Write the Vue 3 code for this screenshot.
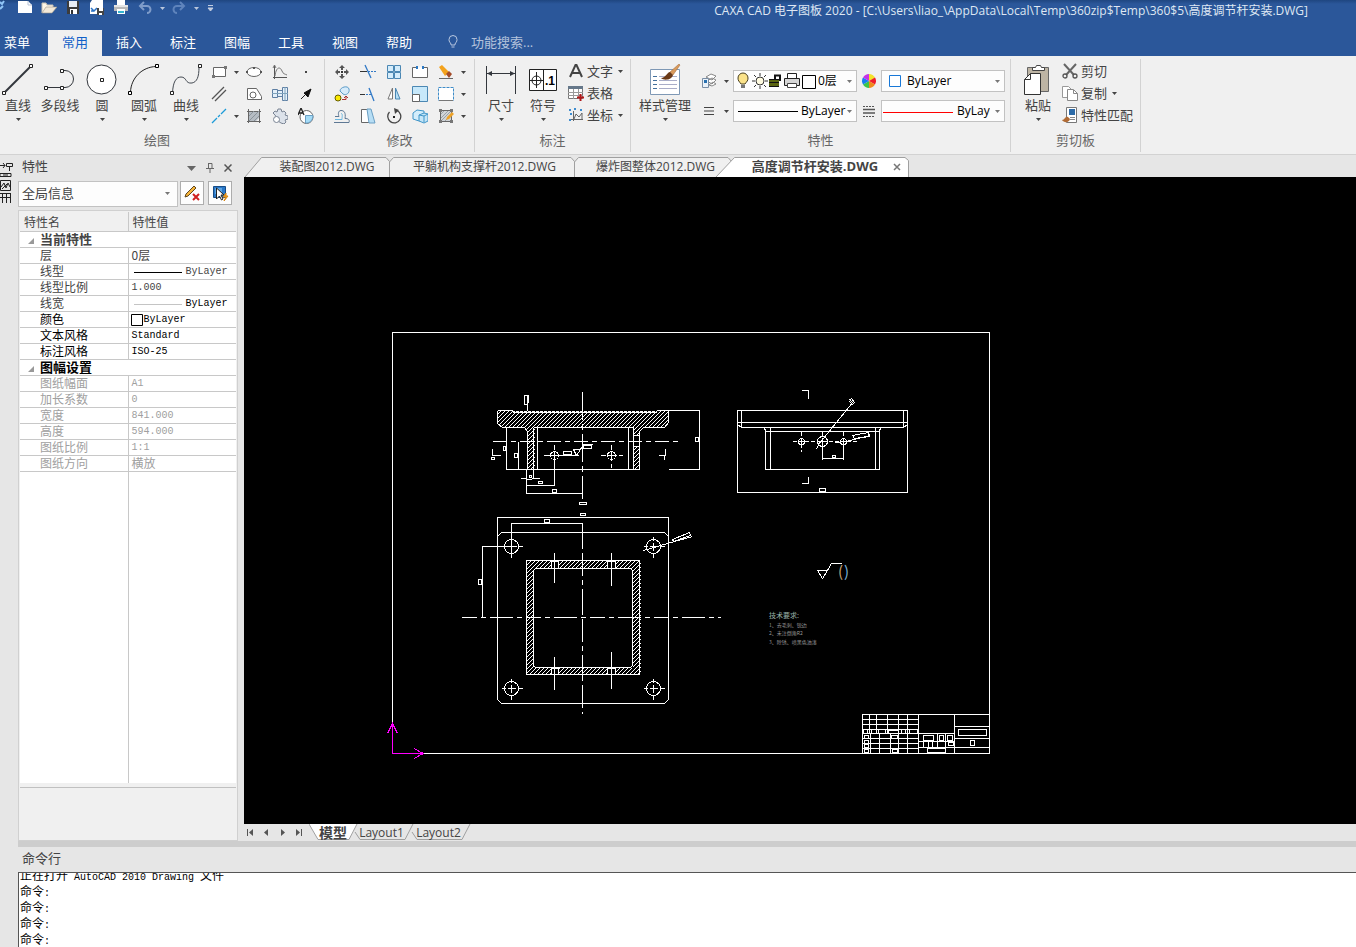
<script setup>
import { ref } from 'vue'

const caret = '<path d="M0 0h5L2.500 3z" fill="#444"/>'

const quick = [
  { name: '新建', w: 16, svg: '<path d="M1 1h10l4 4v8H1z" fill="#fff"/><path d="M11 1v4h4" fill="none" stroke="#b8c4d8"/>' },
  { name: '打开', w: 16, svg: '<path d="M1 13V3h4l1 2h6v3" fill="#fff6e6" stroke="#c9c2b4"/><path d="M1 13l4-6h11l-5 6z" fill="#f3e9d8" stroke="#9a958a" stroke-width=".6"/>' },
  { name: '保存', w: 16, svg: '<path d="M2 1h12v13H2z" fill="#3c3c3c"/><path d="M4 1h8v6H4z" fill="#e8eef5"/><path d="M5 9h7v5H5z" fill="#fff"/><path d="M6 10h2v4H6z" fill="#333"/>' },
  { name: '另存为', w: 16, svg: '<path d="M3 0h11v14H1V3z" fill="#fff"/><path d="M2 8l3 3 3-3M5 11H2" fill="none" stroke="#2b72c4" stroke-width="1.5"/><path d="M8 8h7v7H8z" fill="#444"/><path d="M10 8h4v3h-4zM10 13h3v2h-3z" fill="#fff"/>' },
  { name: '打印', w: 16, svg: '<path d="M4 0h8v5H4z" fill="#fff"/><path d="M1 5h14v6H1z" fill="#b9b9b9"/><path d="M1 5h14v2H1z" fill="#e4e4e4"/><path d="M4 9h8v5H4z" fill="#fff"/><path d="M5 11h6v2H5z" fill="#35b5d0"/>' }
]

const big = {
  line: '<path d="M3 28L28 3" stroke="#33373d" stroke-width="2"/><g fill="#fff" stroke="#222"><path d="M.5 27.500h3v3h-3zM27.500.5h3v3h-3z"/></g>',
  poly: '<path d="M2 23.500h16M18 6.500h3a8.500 8.500 0 010 17h-3" fill="none" stroke="#33373d"/><g fill="#fff" stroke="#222"><path d="M.5 22.500h3v3h-3zM16.500 22.500h3v3h-3zM16.500 5.500h3v3h-3z"/></g>',
  circle: '<circle cx="15.500" cy="15.500" r="14.500" fill="#fff" stroke="#33373d"/><path d="M14.500 14.500h3v3h-3z" fill="#fff" stroke="#222"/>',
  arc: '<path d="M2.500 28C3 14 14 3 28 2.500" fill="none" stroke="#222"/><g fill="#fff" stroke="#000"><path d="M.5 27.500h3v3h-3zM27.500.5h3v3h-3z"/></g>',
  curve: '<path d="M2.500 29C3 18 6 13 11 13c6 0 4 7 11 6 5-1 7-6 7-16" fill="none" stroke="#444a52"/><g fill="#fff" stroke="#222"><path d="M.5 27.500h3v3h-3zM28.500.5h3v3h-3z"/></g>',
  dim: '<path d="M1.500 2v28M30.500 2v28M2 9.500h28" stroke="#33373d" fill="none"/><path d="M2 9.500l5-2.500v5zM30 9.500l-5-2.500v5z" fill="#33373d"/>',
  symbol: '<path d="M2.500 5.500h27v21h-27z" fill="#fff" stroke="#222"/><path d="M16.500 5v22M9.500 8v16M3 16.500h13" stroke="#222"/><circle cx="9.500" cy="16.500" r="4.500" fill="none" stroke="#222"/><text x="18" y="21" font-family="Liberation Sans" font-weight="700" font-size="12">.1</text>',
  style: '<path d="M1.500 5.500h29v25h-29z" fill="#fff" stroke="#7e98b5"/><g stroke="#44709c"><path d="M4 12.500h4M4 16.500h4M4 20.500h4M4 24.500h4"/></g><path d="M10 12.500h18M10 16.500h18M10 20.500h18M10 24.500h18" stroke="#a9adc8"/><path d="M30 0l-9 8 3 3 7-10z" fill="#d99a5b" stroke="#9c6330" stroke-width=".5"/><path d="M21 8c-3 0-4 6-9 6 3 3 11 2 12-3z" fill="#6b3a16"/>',
  paste: '<path d="M5.500 3.500h21v24h-21z" fill="#bdb4a4" stroke="#666"/><path d="M10.500 3.500h3l1-2h4l1 2h3v3h-12z" fill="#fff" stroke="#444"/><path d="M8.500 9.500h10v21h-16v-15z" fill="#fff" stroke="#333"/><path d="M8.500 9.500v6h-6" fill="none" stroke="#333"/>'
}

const drawBig = [
  ['直线', 'line', true], ['多段线', 'poly', false], ['圆', 'circle', true], ['圆弧', 'arc', true], ['曲线', 'curve', true]
]

const drawSmall = [
  { name: '矩形', svg: '<path d="M2.500 3.500h12v9h-12z" fill="#fff" stroke="#666"/><path d="M1 11h3v3H1zM13 2h3v3h-3z" fill="#777"/>' },
  { caret: true },
  { name: '椭圆', svg: '<ellipse cx="8" cy="8" rx="7" ry="4.500" fill="#fff" stroke="#666"/><path d="M7 3h2v2H7zM0 7h2v2H0zM14 7h2v2h-2z" fill="#555"/>' },
  { name: '公式曲线', svg: '<path d="M2.500 1v14M1 13.500h14" stroke="#555"/><path d="M3 12C4 3 8 2 10 7c1 3 3 3 5 4M1 4l1.500-3L4 4" fill="none" stroke="#777"/>' },
  { name: '点', svg: '<path d="M7 7h2v2H7z" fill="#444"/>' },
  { name: '平行线', svg: '<path d="M1 13L13 1M4 15L15 4" stroke="#555" stroke-width="1.300"/>' },
  { blank: true },
  { name: '轮廓线', svg: '<path d="M1.500 2.500h9l5 8v3h-14z" fill="#fff" stroke="#666"/><circle cx="7" cy="9" r="3" fill="none" stroke="#666"/>' },
  { name: '轴', svg: '<path d="M.5 3.500h5v8h-5zM5.500 4.500h5v6h-5zM10.500 1.500h5v13h-5z" fill="#e4f0fa" stroke="#5e7fa3"/><path d="M0 7.500h16M13 1v14" stroke="#7fa3bd"/>' },
  { name: '箭头', svg: '<path d="M3 13l4-4" stroke="#222"/><path d="M13 3l-3 8-2-2-2-2z" fill="#111" stroke="#111"/>' },
  { name: '中心线', svg: '<path d="M1 15L6 10M7 9l2-2M10 6l5-5" stroke="#1c9bd8" stroke-width="1.300"/>' },
  { caret: true },
  { name: '剖面线', svg: '<path d="M3 3h10v7l-3 3H3z" fill="#b5bcc3"/><path d="M1 3.500h14M2.500 1v14M13.500 1v14M1 13.500h14" fill="none" stroke="#666"/><path d="M3 8l5-5M3 13L13 3M8 13l5-5" stroke="#8b939b"/>' },
  { name: '填充', svg: '<path d="M3 7L1 5l2-2 2 1 1-3h3l1 3 2-1 2 2-1 2 3 1v3l-3 1 1 2-2 2-3-1-3-2-1-3z" fill="#dce2ea" stroke="#7a8494"/><circle cx="4.500" cy="11.500" r="3" fill="#fff" stroke="#7a8494"/>' },
  { name: '局部放大', svg: '<circle cx="8.500" cy="9" r="6.500" fill="#fff" stroke="#666"/><path d="M7.500 7.500h7.500c0 4-3 7.500-6 7.500h-1.500z" fill="#a5dcf7" stroke="#6a9fc4"/><path d="M0 7l3-7 3 7M1 5h4" fill="none" stroke="#222" stroke-width="1.300"/>' }
]

const modify = [
  { name: '移动', svg: '<path d="M8 1l3 3H9v2H7V4H5zM8 15l-3-3h2v-2h2v2h2zM1 8l3-3v2h2v2H4v2zM15 8l-3 3V9h-2V7h2V5z" fill="#555"/><path d="M7 7h2v2H7z" fill="#333"/>' },
  { name: '裁剪', svg: '<path d="M5 1l6 13" stroke="#3179c6" stroke-width="1.300"/><path d="M8 7.500h8" stroke="#3179c6" stroke-dasharray="2 1"/><path d="M0 7.500h7" stroke="#333"/>' },
  { name: '阵列', svg: '<g fill="#d4ecfb" stroke="#4b87b3"><path d="M1.500 1.500h6v6h-6zM8.500 1.500h6v6h-6zM1.500 8.500h6v6h-6zM8.500 8.500h6v6h-6z"/></g>' },
  { name: '打断', svg: '<path d="M5 3.500H.5v10h15v-10H11" fill="#fff" stroke="#666"/><path d="M4 2h2v3H4zM10 2h2v3h-2z" fill="#2b79c4"/>' },
  { name: '删除', svg: '<path d="M1 3l3-2 7 7-4 4z" fill="#f3a21c"/><path d="M8 10l3-3 3 3-3 4z" fill="#a44b28"/><path d="M1 14.500h14" stroke="#666"/>' },
  { caret: true },
  { name: '平移复制', svg: '<path d="M6 5c0-4 8-6 9-2s-3 7-6 5z" fill="#d6ebfa" stroke="#5b9bc8"/><circle cx="4" cy="12" r="3" fill="#fbe900" stroke="#665e00"/><path d="M8 13.500h4v-3M10 12l2-2 2 2" fill="none" stroke="#a33"/>' },
  { name: '延伸', svg: '<path d="M9 2l5 13" stroke="#3179c6" stroke-width="1.300"/><path d="M0 8.500h5" stroke="#333"/><path d="M6 8.500h5" stroke="#3179c6" stroke-dasharray="2 1"/>' },
  { name: '镜像', svg: '<path d="M6.500 2v11H2z" fill="#fff" stroke="#777"/><path d="M9.500 2v11H14z" fill="#b8dff5" stroke="#4b87b3"/>' },
  { name: '缩放', svg: '<path d="M.5.500h15v15H.5z" fill="#c7e8fa" stroke="#4b87b3"/><path d="M.5 8.500h7v7h-7z" fill="#fff" stroke="#666"/>' },
  { name: '拉伸', svg: '<path d="M.5 1.500h15v13H.5z" fill="#fff"/><path d="M.5 1.500h15v13H.5z" fill="none" stroke="#3f8cc8" stroke-dasharray="3 1"/><path d="M1 14.500h14" stroke="#777"/>' },
  { caret: true },
  { name: '等距线', svg: '<path d="M0 14.500h15c1-3-1-4-4-4 1-6-1-8-4-8s-3 4-2 6H1" fill="none" stroke="#5e7894"/><path d="M1 11.500h7c0-3 1-6-1-6" fill="none" stroke="#6ab7e0"/>' },
  { name: '倒角', svg: '<path d="M1.500 1.500h8l4 13h-12z" fill="#fff" stroke="#666"/><path d="M7 1h4l4 14H9z" fill="#b7def5" stroke="#6a9fc4"/>' },
  { name: '旋转', svg: '<path d="M11 2.500A6.500 6.500 0 113.500 4" fill="none" stroke="#444" stroke-width="1.300"/><path d="M8 0l5 2-4 4z" fill="#444"/><path d="M7 8h2v2H7z" fill="#222"/>' },
  { name: '分解', svg: '<path d="M1 5l4-3 7 1v7l-5 3-6-2z" fill="#d3edfb" stroke="#3f95c8"/><path d="M7 7l5-2 4 1v7l-4 2-5-2zM7 7l5 1v6M12 8l4-2" fill="#c5e6f8" stroke="#3f95c8"/>' },
  { name: '编辑填充', svg: '<path d="M2.500 2.500h11v11h-11z" fill="#d0d4d8" stroke="#666"/><path d="M3 6l3-3M3 10l7-7M3 13L13 3M7 13l6-6" stroke="#9aa0a6"/><path d="M1 1h3v3H1zM12 1h3v3h-3zM1 12h3v3H1zM12 12h3v3h-3z" fill="#777"/><path d="M8 12l1-3 5-5 2 2-5 5z" fill="#eda229"/>' },
  { caret: true }
]

const annotate = [
  { name: '文字', caret: true, svg: '<path d="M2 14L7.500 2h1L14 14M4 10h8" fill="none" stroke="#444" stroke-width="2"/>' },
  { name: '表格', caret: false, svg: '<path d="M.5 1.500h14v12H.5z" fill="#fff" stroke="#777"/><path d="M0 1h15v3H0z" fill="#66788a"/><path d="M0 7.500h15M0 10.500h15M5.500 4v10M10.500 4v10" stroke="#999"/><path d="M12.500 9v7M9 12.500h7" stroke="#b01818" stroke-width="2"/>' },
  { name: '坐标', caret: true, svg: '<path d="M5.500 4v10M3 12.500h12M6 12l2-5 3 3 3-4v6" fill="none" stroke="#666"/><path d="M1 2h2v2H1zM2 6h2v2H2zM6 1h2v2H6zM12 2h2v2h-2zM1 12h2v2H1z" fill="#3c8cd0"/>' }
]

const clipboard = [
  { name: '剪切', caret: false, svg: '<path d="M2 1l10 11M14 1L4 12" stroke="#666" stroke-width="2"/><circle cx="3" cy="13" r="2" fill="none" stroke="#555" stroke-width="1.300"/><circle cx="13" cy="13" r="2" fill="none" stroke="#555" stroke-width="1.300"/>' },
  { name: '复制', caret: true, svg: '<path d="M.5 1.500h6l3 3v8h-9z" fill="#fff" stroke="#999"/><path d="M5.500 4.500h6l4 4v7h-10z" fill="#fff" stroke="#888"/><path d="M11.500 5v3.500h4" fill="none" stroke="#888"/>' },
  { name: '特性匹配', caret: false, svg: '<path d="M4.500.500h10v15h-10z" fill="#fff" stroke="#777"/><path d="M7 2h6v6H7z" fill="#2c6ba8"/><path d="M8 10.500h5M8 12.500h5" stroke="#888"/><path d="M0 13c3 0 3-4 6-3l2 2c-1 4-6 4-8 1z" fill="#b06b35"/>' }
]

const menus = ['常用', '插入', '标注', '图幅', '工具', '视图', '帮助']
const activeMenu = ref('常用')

const rows = [
  { label: '层', value: '0层', han: true },
  { label: '线型', value: 'ByLayer', line: '#000' },
  { label: '线型比例', value: '1.000' },
  { label: '线宽', value: 'ByLayer', line: '#c4c4c4', dark: true },
  { label: '颜色', value: 'ByLayer', swatch: true, dark: true },
  { label: '文本风格', value: 'Standard', dark: true },
  { label: '标注风格', value: 'ISO-25', dark: true }
]
const sheet = [
  ['图纸幅面', 'A1'], ['加长系数', '0'], ['宽度', '841.000'], ['高度', '594.000'], ['图纸比例', '1:1'], ['图纸方向', '横放', true]
]

const title = 'CAXA CAD 电子图板 2020 - [C:\\Users\\liao_\\AppData\\Local\\Temp\\360zip$Temp\\360$5\\高度调节杆安装.DWG]'
const holes = [[511, 546], [653, 546], [511, 688], [653, 688]]
</script>

<template>
  <div class="app">
    <header class="top">
      <div class="titlebar">
        <div class="quick">
          <svg class="appmark" width="6" height="16"><path d="M0 2l2 2 2-3M0 9l3-3" stroke="#8fc4f5" stroke-width="2" fill="none" /></svg>
          <button v-for="q in quick" :key="q.name" :aria-label="q.name"><svg width="16" height="16" v-html="q.svg" /></button>
          <button aria-label="撤销" class="hist"><svg width="16" height="16"><path d="M3 6h7a3 3 0 010 7M7 2L3 6l4 4" fill="none" stroke="#7f9cc9" stroke-width="2" /></svg></button>
          <button aria-label="撤销列表" class="drop"><svg width="5" height="3"><path d="M0 0h5L2.500 3z" fill="#b9c6dc" /></svg></button>
          <button aria-label="重做" class="hist"><svg width="16" height="16"><path d="M13 6H6a3 3 0 000 7M9 2l4 4-4 4" fill="none" stroke="#5f84bc" stroke-width="2" /></svg></button>
          <button aria-label="重做列表" class="drop"><svg width="5" height="3"><path d="M0 0h5L2.500 3z" fill="#b9c6dc" /></svg></button>
          <button aria-label="自定义" class="drop more"><svg width="7" height="7"><path d="M1 .5h5M1 3h5L3.500 6z" stroke="#c3cde0" fill="#c3cde0" /></svg></button>
        </div>
        <h1>{{ title }}</h1>
      </div>
      <nav class="menus">
        <button class="file">菜单</button>
        <button v-for="m in menus" :key="m" :class="{ active: m === activeMenu }" @click="activeMenu = m">{{ m }}</button>
        <label class="search">
          <svg width="10" height="14"><path d="M3 9C2 7 1 7 1 4.500a4 4 0 018 0C9 7 8 7 7 9v1H3zM3.500 12h3" fill="none" stroke="#b8c7e0" /></svg>
          <input type="text" placeholder="功能搜索..." aria-label="功能搜索">
        </label>
      </nav>
    </header>

    <section class="ribbon">
      <div class="group draw">
        <div class="tools">
          <button v-for="b in drawBig" :key="b[0]" class="big">
            <svg width="32" height="32" v-html="big[b[1]]" /><span>{{ b[0] }}</span>
            <svg v-if="b[2]" width="5" height="3" v-html="caret" />
          </button>
          <div class="small">
            <template v-for="(s, i) in drawSmall" :key="i">
              <span v-if="s.blank" />
              <button v-else :aria-label="s.name || '更多'">
                <svg v-if="s.caret" width="5" height="3" v-html="caret" />
                <svg v-else width="16" height="16" v-html="s.svg" />
              </button>
            </template>
          </div>
        </div>
        <h2>绘图</h2>
      </div>

      <div class="group modify">
        <div class="tools">
          <div class="small">
            <button v-for="(s, i) in modify" :key="i" :aria-label="s.name || '更多'">
              <svg v-if="s.caret" width="5" height="3" v-html="caret" />
              <svg v-else width="16" height="16" v-html="s.svg" />
            </button>
          </div>
        </div>
        <h2>修改</h2>
      </div>

      <div class="group note">
        <div class="tools">
          <button class="big"><svg width="32" height="32" v-html="big.dim" /><span>尺寸</span><svg width="5" height="3" v-html="caret" /></button>
          <button class="big"><svg width="32" height="32" v-html="big.symbol" /><span>符号</span><svg width="5" height="3" v-html="caret" /></button>
          <div class="list">
            <button v-for="a in annotate" :key="a.name">
              <svg width="16" height="16" v-html="a.svg" />{{ a.name }}<svg v-if="a.caret" width="5" height="3" v-html="caret" />
            </button>
          </div>
        </div>
        <h2>标注</h2>
      </div>

      <div class="group props">
        <div class="tools">
          <button class="big wide"><svg width="32" height="32" v-html="big.style" /><span>样式管理</span><svg width="5" height="3" v-html="caret" /></button>
          <div class="fields">
            <button aria-label="图层设置"><svg width="16" height="16"><path d="M5 4l5-3 5 2-4 4zM6 8l5-3 4 2-4 4zM8 12l4-3 3 2-4 2z" fill="#fff" stroke="#888" /><path d="M1.500 5.500h6v9h-6z" fill="#eaf2fa" stroke="#7a8ea5" /><path d="M3 7h3v3H3z" fill="#2870b0" /></svg></button>
            <button aria-label="图层列表"><svg width="5" height="3" v-html="caret" /></button>
            <div class="combo">
              <svg width="84" height="20">
                <path d="M7 13C5 10 4 10 4 7a5 5 0 0110 0c0 3-1 3-3 6z" fill="#fbe38a" stroke="#4a4020" /><path d="M7 14h4v3H7z" fill="#777" />
                <circle cx="26" cy="10" r="4" fill="#fffbe0" stroke="#333" /><path d="M26 2v3M26 15v3M18 10h3M31 10h3M20 4l2 2M30 14l2 2M32 4l-2 2M22 14l-2 2" stroke="#333" />
                <path d="M41 9V4.500h5V10" fill="none" stroke="#111" stroke-width="2" /><path d="M35 8h10v8H35z" fill="#5a6410" /><path d="M35 8.500h10M35 11.500h10M35 15.500h10" stroke="#111" />
                <path d="M53.500 2.500h9v6h-9z" fill="#fff" stroke="#222" /><path d="M50.500 7.500h15v7h-15z" fill="#d6d6d6" stroke="#222" /><path d="M53.500 12.500h9v4h-9z" fill="#fff" stroke="#444" />
                <path d="M68.500 4.500h13v13h-13z" fill="#fff" stroke="#000" />
              </svg>
              <select aria-label="图层"><option>0层</option></select>
              <svg width="5" height="3"><path d="M0 0h5L2.500 3z" fill="#777" /></svg>
            </div>
            <button aria-label="颜色"><svg width="14" height="14"><g><path d="M7 7L7 0A7 7 0 0113 4z" fill="#f3e32a" /><path d="M7 7l6-3.500a7 7 0 010 7z" fill="#f01d2b" /><path d="M7 7l6 3.500A7 7 0 017 14z" fill="#f08a1c" /><path d="M7 7v7a7 7 0 01-6-3.500z" fill="#3ec64a" /><path d="M7 7l-6 3.500a7 7 0 010-7z" fill="#1a7ef0" /><path d="M7 7L1 3.500A7 7 0 017 0z" fill="#c832e8" /></g></svg></button>
            <div class="combo">
              <svg width="22" height="20"><path d="M7.500 4.500h11v11h-11z" fill="#fff" stroke="#1878d8" /></svg>
              <select class="gap" aria-label="颜色值"><option>ByLayer</option></select>
              <svg width="5" height="3"><path d="M0 0h5L2.500 3z" fill="#777" /></svg>
            </div>
            <button aria-label="线型"><svg width="12" height="12"><path d="M1 2.500h10M1 6h10M1 9.500h10" stroke="#444" /></svg></button>
            <button aria-label="线型列表"><svg width="5" height="3" v-html="caret" /></button>
            <div class="combo">
              <svg width="64" height="20"><path d="M4 10.500h60" stroke="#000" /></svg>
              <select class="tight" aria-label="线型值"><option>ByLayer</option></select>
              <svg width="5" height="3"><path d="M0 0h5L2.500 3z" fill="#777" /></svg>
            </div>
            <button aria-label="线宽"><svg width="14" height="14"><path d="M1 2.500h12M1 12.500h12" stroke="#555" stroke-dasharray="2 1" /><path d="M1 5.500h12M1 9h12" stroke="#555" stroke-width="1.500" /></svg></button>
            <div class="combo">
              <svg width="72" height="20"><path d="M1 11.500h70" stroke="#f00" /></svg>
              <select class="tight clip" aria-label="线宽值"><option>ByLayer</option></select>
              <svg width="5" height="3"><path d="M0 0h5L2.500 3z" fill="#777" /></svg>
            </div>
          </div>
        </div>
        <h2>特性</h2>
      </div>

      <div class="group clips">
        <div class="tools">
          <button class="big"><svg width="32" height="32" v-html="big.paste" /><span>粘贴</span><svg width="5" height="3" v-html="caret" /></button>
          <div class="list">
            <button v-for="a in clipboard" :key="a.name">
              <svg width="16" height="16" v-html="a.svg" />{{ a.name }}<svg v-if="a.caret" width="5" height="3" v-html="caret" />
            </button>
          </div>
        </div>
        <h2>剪切板</h2>
      </div>
    </section>

    <div class="work">
      <div class="strip">
        <svg width="14" height="52" fill="none" stroke="#222">
          <path d="M0 10.500h5M3 8l2 2.500L3 13M6.500 8.500h6v3h-6zM9.500 11v5M0 18.500h11v3H0zM3 20h5M.5 25.500h10v10H.5zM1 32l3-4 2 5 2-5 2 4M2 34l5-5M0 38.500h11M2.500 38v10M6.500 38v10M10.500 38v10M0 42.500h11" />
        </svg>
      </div>

      <aside class="panel">
        <div class="phead">
          <h2>特性</h2>
          <button aria-label="菜单"><svg width="9" height="5"><path d="M0 0h9L4.500 5z" fill="#666" /></svg></button>
          <button aria-label="固定"><svg width="8" height="10"><path d="M2 .5h4v5M2.500 0v6M0 5.500h8M4 6v4" fill="none" stroke="#666" /></svg></button>
          <button aria-label="关闭"><svg width="8" height="8"><path d="M.5.500l7 7M7.500.500l-7 7" stroke="#555" stroke-width="1.500" /></svg></button>
        </div>
        <div class="pick">
          <div class="combo">
            <select aria-label="对象"><option>全局信息</option></select>
            <svg width="5" height="3"><path d="M0 0h5L2.500 3z" fill="#777" /></svg>
          </div>
          <button aria-label="编辑"><svg width="18" height="18"><path d="M2 13l1-3 8-8 2 2-8 8z" fill="#f6b43a" stroke="#5d4620" /><path d="M10 10l6 6M16 10l-6 6" stroke="#d02020" stroke-width="2" /></svg></button>
          <button aria-label="选择"><svg width="18" height="18"><path d="M2.500 2.500h12v11h-12z" fill="#2a78c8" stroke="#174c86" /><path d="M4 4h7v6H4z" fill="#5fa5e2" /><path d="M5.500 4v11l3-3 2 4 1.500-1-2-4h3z" fill="#fff" stroke="#222" /><path d="M15 9l-3 4h3l-2 4 4-5h-2z" fill="#f5a623" stroke="#d88510" /></svg></button>
        </div>
        <div class="sheet">
          <table>
            <thead><tr><th>特性名</th><th>特性值</th></tr></thead>
            <tbody>
              <tr class="cat"><td colspan="2"><svg width="6" height="6"><path d="M6 0v6H0z" fill="#999" /></svg>当前特性</td></tr>
              <tr v-for="r in rows" :key="r.label" :class="{ dark: r.dark && !r.line }">
                <td>{{ r.label }}</td>
                <td :class="{ dark: r.dark, han: r.han }">
                  <div class="val">
                    <svg v-if="r.line" width="54" height="12"><path d="M2 6.500h48" :stroke="r.line" /></svg>
                    <svg v-if="r.swatch" class="swatch" width="12" height="12"><path d="M.5.500h11v11H.5z" fill="#fff" stroke="#000" /></svg>
                    {{ r.value }}
                  </div>
                </td>
              </tr>
              <tr class="cat dark"><td colspan="2"><svg width="6" height="6"><path d="M6 0v6H0z" fill="#999" /></svg>图幅设置</td></tr>
              <tr v-for="s in sheet" :key="s[0]" class="off"><td>{{ s[0] }}</td><td :class="{ han: s[2] }">{{ s[1] }}</td></tr>
            </tbody>
          </table>
          <div class="rest"><span /><span /></div>
          <div class="hint" />
        </div>
      </aside>

      <main class="view">
        <div class="docs">
          <svg class="shape" width="672" height="22" fill="#f0f0f0" stroke="#a0a0a0">
            <path d="M1 22L17.500 2.500H142l3.500 4V22" /><path d="M145.500 22V7l4-4.500H327l3.500 4V22" /><path d="M330.500 22V7l4-4.500H484L488 7v15" />
            <path d="M472 22L490.500 2.500H661l3.500 3V22" fill="#fff" />
          </svg>
          <button>装配图2012.DWG</button>
          <button class="second">平躺机构支撑杆2012.DWG</button>
          <button class="third">爆炸图整体2012.DWG</button>
          <button class="active">高度调节杆安装.DWG</button>
          <button class="close" aria-label="关闭文档"><svg width="8" height="8"><path d="M1 1l6 6M7 1L1 7" stroke="#777" stroke-width="1.500" /></svg></button>
        </div>

        <div class="canvas">
          <svg viewBox="244 177 1112 647" width="1112" height="647" fill="none" stroke="#fff" shape-rendering="crispEdges">
            <defs>
              <pattern id="hatch" width="4" height="4" patternUnits="userSpaceOnUse" patternTransform="translate(-.5 -.5)">
                <path d="M0 3h1v1H0zM1 2h1v1H1zM2 1h1v1H2zM3 0h1v1H3z" fill="#fff" stroke="none" />
              </pattern>
            </defs>
            <g transform="translate(.5 .5)">
              <path d="M392 332H989V753H392z" />

              <!-- front section -->
              <path d="M497 410H668V422l-4 5h-21l-4 4v4h-7v-8H534v42h-7v-38l-4-4h-21l-5-5zM633 446h6v23h-6z" fill="url(#hatch)" stroke="none" />
              <path d="M497 410h15M656 410h43M512 412H656M497 410v13l5 4h22l3 4v38M668 410v12l-4 5h-21l-4 4v38M533 427V469M533 427H633V469M633 435h6M633 446h6M506 427V469H639M537 427V469M628 427V469" />
              <path d="M512 411H656" stroke-dasharray="2 2" />
              <path d="M492 441H678" stroke-dasharray="14 4 5 4" />
              <path d="M582 391V498" stroke-dasharray="28 4 6 4" />
              <path d="M699 410V469M668 469h31M695 437h3v4h-3zM524 395h3v9h-3zM528 394v8M527 404v6M492 448v7h8M491 457h3v2h-3zM503 446h2v4h-2zM514 453h3v4h-3zM518 441v28M665 448v7h-7M664 455v4" />
              <circle cx="554" cy="455" r="4" /><circle cx="611" cy="455" r="4" />
              <path d="M543 455h35M554 444v5M554 451v34M600 455h5M607 455h9M618 455h4M611 444v5M611 451v9M611 463v4M563 451h8v3h-8zM573 449h7l-4 6zM580 449l3-5h9M583 445h8v3h-8z" />
              <path d="M526 469v24h56M526 485h28M533 469v9M520 478h5l3 1 8-1h3M529 475h2v2h-2zM538 481h4v2h-4zM552 489h4v3h-4zM579 502h7v2h-7z" />

              <!-- plan -->
              <path d="M501 532H664l4 4V699l-4 4H501l-4-4V536z" />
              <path d="M497 516V536M668 516V536M497 517H668M580 513h5v2h-5zM511 522v33M511 523h71M544 519h5v3h-5zM482 546V617M481 546h35M478 579h3v5h-3z" />
              <g v-for="h in holes" :key="h.join()" :transform="`translate(${h[0]} ${h[1]})`">
                <circle r="7" /><path d="M-4 0h8M0-4v8M-10 0h4M7 0h4M0-10v4M0 7v4" />
              </g>
              <path d="M526 560H640V674H526zM533 568V667H632V568z" fill="url(#hatch)" fill-rule="evenodd" stroke="none" />
              <path d="M526 560H639V674H526zM535 568H630l2 2V665l-2 2H535l-2-2V570z" />
              <path d="M551 561h7v7h-7zM607 561h8v7h-8zM551 668h7v6h-7zM607 668h8v6h-8z" fill="#000" />
              <path d="M554 552V582M611 552V585M554 656V689M611 651V688" />
              <path d="M461 617H720" stroke-dasharray="15 4 5 4 23 4 5 4" />
              <path d="M582 522V713" stroke-dasharray="26 4 23 4 5 4" />
              <path d="M643 550l24-7 25-7M672 539l17-7 1 3-17 6z" />

              <!-- side view -->
              <path d="M737 410H907V492H737zM737 422H907M741 410v17H903V410M737 424l4 3M907 424l-4 3M764 427l1 4V469H879V431l1-4M765 431H879M770 427V469M875 427V469M819 488h6v3h-6z" />
              <circle cx="801" cy="441" r="3" /><circle cx="822" cy="441" r="5" /><circle cx="843" cy="441" r="3" />
              <path d="M792 441h64M801 431v20M822 431v8M843 431v8" stroke-dasharray="4 2" />
              <path d="M801 438v7M798 441h7M819 441h7M840 441h7M822 438v21M843 438v21M822 458h21M832 455h3v2h-3zM816 449l2-5 35-43M849 399l4 4M849 401l2-3 3 4-2 2zM835 442l11-1 23-6M852 435l16-3 1 4-15 2zM801 390h7v8M808 476v7h-7" />

              <!-- surface finish mark -->
              <path d="M817 570h10l-5 8zM827 570l4-7h10" />

              <!-- title block -->
              <path d="M862 753V714H989M862 719h56M862 724h56M862 729h56M862 733h92M862 738h56M862 743h56M862 748h56M869 714v19M876 714v19M887 714v19M898 714v39M907 714v39M918 714v39M870 733v20M879 733v20M890 733v20M954 714v39M954 726h35M954 738h35M918 747h71M918 741h36M937 733v14M945 733v20M923 741v6M928 741v6M932 741v6M923 735h10v5h-10zM939 735h4v5h-4zM947 735h5v5h-5zM948 742h5v3h-5zM927 748h18v4h-18zM958 729h28v6h-28zM970 740h4v5h-4z" />
              <path d="M863 729h4v4h-4zM871 729h5v4h-5zM878 729h7v4h-7zM888 730h10v3h-10zM901 729h4v4h-4zM909 729h8v4h-8zM864 735h4v3h-4zM864 740h4v3h-4zM864 744h4v3h-4zM864 749h4v3h-4zM891 735h6v3h-6zM892 749h5v3h-5z" />

              <g stroke="#f0f"><path d="M392 753V723M387 733l5-10 5 10M392 753h31M414 748l8 5-8 5" /><path d="M391 724h2v1h-2zM421 752h1v2h-1z" fill="#f0f" /></g>
            </g>
            <g stroke="none" class="caption">
              <text x="838" y="577" font-size="15" fill="#c8a878">(</text>
              <text x="844" y="577" font-size="15" fill="#78b4d8">)</text>
              <text x="769" y="618" font-size="7" fill="#9ab0a8">技术要求:</text>
              <text x="769" y="627" font-size="5" fill="#999">1、去毛刺、锐边</text>
              <text x="769" y="635" font-size="5" fill="#999">2、未注倒角R2</text>
              <text x="769" y="644" font-size="5" fill="#999">3、除锈、喷黑色油漆</text>
            </g>
          </svg>
        </div>

        <div class="layouts">
          <button aria-label="首页"><svg width="7" height="7"><path d="M.5 0v7" stroke="#555" /><path d="M6 0v7L2 3.500z" fill="#555" /></svg></button>
          <button aria-label="上一页"><svg width="7" height="7"><path d="M5 0v7L1 3.500z" fill="#555" /></svg></button>
          <button aria-label="下一页"><svg width="7" height="7"><path d="M2 0v7l4-3.500z" fill="#555" /></svg></button>
          <button aria-label="末页"><svg width="7" height="7"><path d="M6.500 0v7" stroke="#555" /><path d="M1 0v7l4-3.500z" fill="#555" /></svg></button>
          <div class="ltabs">
            <svg class="shape" width="162" height="17" fill="none" stroke="#a0a0a0">
              <path d="M46 8l5 7.500h45L104 0M103 8l5 7.500h45L161 0" /><path d="M0 0l9 15.500h31L48 0" fill="#fff" />
            </svg>
            <button class="active">模型</button><button>Layout1</button><button>Layout2</button>
          </div>
        </div>
      </main>
    </div>

    <section class="command">
      <h2>命令行</h2>
      <div class="log">
        <p>正在打开<i> AutoCAD 2010 Drawing </i>文件</p>
        <p v-for="n in 4" :key="n">命令<i>:</i></p>
      </div>
    </section>
  </div>
</template>

<style>
body { margin: 0; }
</style>

<style scoped>
.app {
  height: 100vh;
  display: flex;
  flex-direction: column;
  overflow: hidden;
  background: #e6e6e6;
  color: #444;
  font: 13px/18px "Open Sans", "Noto Sans CJK SC", sans-serif;
}
button { border: 0; padding: 0; margin: 0; background: none; color: inherit; font: inherit; white-space: nowrap; }
svg { display: block; flex: none; }
h1, h2, p { margin: 0; font: inherit; }
select { appearance: none; border: 0; padding: 0; background: none; color: #000; font: inherit; min-width: 0; flex: 1; outline: 0; }

.top { background: linear-gradient(#1f4680, #2b579a 4px); color: #fff; }
.titlebar { display: flex; justify-content: space-between; height: 30px; }
.titlebar h1 { font-size: 12px; line-height: 22px; padding-right: 48px; color: #dfe7f3; white-space: nowrap; }
.quick { display: flex; height: 16px; align-items: center; }
.quick button { width: 24px; display: flex; justify-content: center; }
.appmark { margin-right: 7px; }
.quick .drop { width: 10px; }
.quick .more { width: 18px; }
.menus { display: flex; height: 26px; }
.menus button { width: 54px; padding-bottom: 2px; }
.menus .file { width: 34px; margin-right: 14px; }
.menus .active { background: #f0f0f0; color: #1060c8; }
.search { display: flex; align-items: center; gap: 13px; margin-left: 22px; padding-bottom: 2px; }
.search input { border: 0; padding: 0; background: none; font: inherit; width: 120px; outline: 0; color: #fff; }
.search input::placeholder { color: #b4c3dc; opacity: 1; }

.ribbon { display: flex; height: 98px; background: #f0f0f0; border-bottom: 1px solid #d2d2d2; flex: none; }
.group { display: flex; flex-direction: column; justify-content: space-between; margin: 3px 0 2px; border-right: 1px solid #d2d2d2; }
.group h2 { text-align: center; color: #666; line-height: 20px; padding-bottom: 2px; }
.tools { display: flex; align-items: flex-start; }
.big { width: 42px; padding-top: 5px; display: flex; flex-direction: column; align-items: center; line-height: 18px; }
.big span { padding-bottom: 4px; }
.big.wide { width: 68px; }
.draw .tools { margin-left: -3px; padding-right: 5px; }
.draw h2 { padding-right: 10px; }
.modify .tools { padding: 0 7px 0 4px; }
.note .tools { padding: 0 5px; }
.clips .tools { padding: 0 6px; }
.small { display: grid; grid-auto-rows: 22px; padding-top: 2px; }
.draw .small { grid-template-columns: 24px 10px 26px 26px 26px; }
.modify .small { grid-template-columns: repeat(5, 26px) 8px; }
.small button { display: flex; align-items: center; justify-content: center; }
.list { padding-top: 1px; display: flex; flex-direction: column; margin-left: 4px; }
.list button { display: flex; align-items: center; gap: 3px; height: 22px; }
.list button svg:last-child:not(:first-child) { margin-left: 2px; }
.note .list { width: 57px; }
.clips .list { width: 72px; }
.clips .list { margin-left: 3px; }
.fields { display: grid; grid-template-columns: 20px 14px 124px 24px 124px; grid-auto-rows: 22px; row-gap: 8px; padding: 11px 5px 0 0; }
.fields > button { display: flex; align-items: center; justify-content: center; }
.combo { display: flex; align-items: center; box-sizing: border-box; border: 1px solid #c2c2c2; background: #fdfdfd; padding-right: 4px; font-size: 12px; overflow: hidden; }
.combo .gap { padding-left: 3px; }
.combo .tight { margin-left: 3px; }
.combo .clip { margin-right: 5px; }

.work { display: flex; flex: 1; min-height: 0; }
.strip { width: 18px; flex: none; }
.panel { width: 220px; flex: none; display: flex; flex-direction: column; }
.phead { display: flex; align-items: center; gap: 10px; height: 26px; padding-right: 6px; }
.phead h2 { flex: 1; padding: 0 0 4px 4px; }
.pick { display: flex; gap: 4px; height: 26px; padding-bottom: 3px; }
.pick .combo { width: 160px; padding: 0 7px 2px 3px; font-size: 13px; margin-right: -2px; }
.pick .combo select { color: #444; }
.pick button { width: 24px; height: 24px; border: 1px solid #adadad; background: #fdfdfd; display: flex; align-items: center; justify-content: center; box-sizing: border-box; }
.sheet { flex: 1; display: flex; flex-direction: column; border: 1px solid #d0d0d0; padding: 1px 1px 0; background: #f0f0f0; min-height: 0; }
table { border-collapse: collapse; table-layout: fixed; width: 100%; background: #fff; font: 12px/15px "Noto Sans CJK SC", sans-serif; }
th { height: 19px; padding: 0 4px; text-align: left; font-weight: 400; background: #f0f0f0; border-bottom: 1px solid #c8c8c8; }
th + th, td + td { border-left: 1px solid #c8c8c8; }
td { height: 13px; line-height: 13px; padding: 0 0 2px 20px; border-bottom: 1px solid #c8c8c8; }
td + td { height: 15px; line-height: 15px; padding: 0 0 0 3px; font-family: "Liberation Mono", "Noto Sans CJK SC", monospace; font-size: 10px; }
td.han { height: 13px; line-height: 13px; padding-bottom: 2px; font: 12px/13px "Noto Sans CJK SC", sans-serif; }
.val { display: flex; align-items: center; }
.swatch { margin: 0 1px 0 -1px; }
.cat td { font-weight: 700; font-size: 13px; padding-left: 8px; }
.cat svg { display: inline-block; margin-right: 6px; }
.dark { color: #000; }
.off { color: #a0a0a0; }
.rest { flex: 1; display: grid; grid-template-columns: 1fr 1fr; background: #fff; margin-bottom: 4px; }
.rest span + span { border-left: 1px solid #c8c8c8; }
.hint { height: 52px; border-top: 1px solid #c0c0c0; }

.view { flex: 1; min-width: 0; display: flex; flex-direction: column; margin-left: 6px; }
.docs { position: relative; display: flex; height: 22px; line-height: 24px; font-size: 12px; background: #e6e6e6; flex: none; }
.shape { position: absolute; left: 0; top: 0; }
.docs button { position: relative; width: 130px; margin-left: 18px; }
.docs .second { width: 185px; margin-left: 0; }
.docs .third { width: 157px; margin-left: 0; }
.docs .active { width: 150px; margin-left: 6px; font-weight: 700; font-size: 13px; line-height: 22px; }
.docs .close { width: 14px; margin: 2px 0 0; display: flex; align-items: center; justify-content: center; }
.canvas { flex: 1; min-height: 0; background: #000; overflow: hidden; }
.caption { font-family: "Noto Sans CJK SC", sans-serif; }
.layouts { display: flex; height: 17px; flex: none; font-size: 12px; line-height: 16px; }
.layouts > button { width: 16px; display: flex; align-items: center; padding-left: 3px; box-sizing: border-box; }
.ltabs { position: relative; display: flex; margin-left: 1px; padding-left: 8px; }
.ltabs button { position: relative; width: 57px; }
.ltabs .active { width: 32px; margin-right: 4px; font-weight: 700; font-size: 14px; }

.command { flex: none; height: 106px; margin-left: 18px; border-top: 6px solid #cdcdcd; box-sizing: border-box; display: flex; flex-direction: column; overflow: hidden; }
.command h2 { height: 25px; line-height: 22px; padding-left: 4px; flex: none; }
.log { flex: 1; min-height: 0; display: flex; flex-direction: column; justify-content: flex-end; background: #fff; border: 1px solid #555; border-width: 1px 0 0 1px; overflow: hidden; color: #000; font: 12px/16px "Noto Sans CJK SC", sans-serif; padding-left: 1px; }
.log p { height: 16px; flex: none; white-space: pre; }
.log i { font: 10px/16px "Liberation Mono", monospace; }
</style>
